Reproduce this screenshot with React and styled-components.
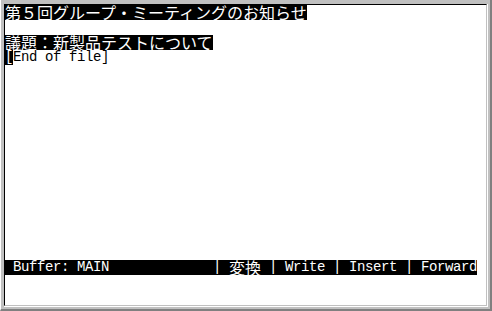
import React from 'react';
import styled, { createGlobalStyle } from 'styled-components';

const GlobalStyle = createGlobalStyle`
  html, body {
    margin: 0;
    padding: 0;
    background: #c0c0c0;
  }
`;

const Frame = styled.div`
  width: 492px;
  height: 311px;
  box-sizing: border-box;
  background: #c0c0c0;
  border-left: 1px solid #ffffff;
  border-right: 2px solid #808080;
  border-bottom: 2px solid #808080;
  padding: 4px 2px 2px 3px;
`;

const Bevel = styled.div`
  height: 100%;
  box-sizing: border-box;
  border-right: 1px solid #ffffff;
  border-bottom: 1px solid #ffffff;
`;

// terminal area: 8px half-width cells, 16px full-width cells, 15px rows
const Screen = styled.div`
  height: 100%;
  box-sizing: border-box;
  display: flex;
  flex-direction: column;
  background: #ffffff;
  border-top: 1px solid #000000;
  border-left: 1px solid #000000;
  border-right: 1px solid #c0c0c0;
  border-bottom: 1px solid #c0c0c0;
  color: #000000;
  font-family: "Liberation Mono", "DejaVu Sans Mono", monospace;
  font-size: 14px;
  letter-spacing: -0.4px;
  line-height: 15px;
`;

const Body = styled.div`
  flex: 1;
`;

const Line = styled.div`
  height: 15px;
  line-height: 15px;
  white-space: pre;
`;

const Highlight = styled.span`
  display: inline-block;
  height: 15px;
  line-height: 15px;
  vertical-align: top;
  background: #000000;
  color: #ffffff;
`;

const Wide = styled.span`
  font-family: "Noto Sans CJK JP", sans-serif;
  font-size: 16px;
  letter-spacing: 0;
  line-height: 15px;
`;

const Cursor = styled.span`
  display: inline-block;
  width: 8px;
  height: 15px;
  vertical-align: top;
  background: #000000;
  color: #ffffff;
`;

const StatusBar = styled.div`
  display: flex;
  width: 472px;
  height: 15px;
  line-height: 15px;
  background: #000000;
  color: #ffffff;
  white-space: pre;
`;

const BufferName = styled.span`
  flex: 1;
  padding-left: 8px;
`;

const Separator = styled.span`
  width: 8px;
`;

const Command = styled.span`
  padding-left: 8px;
  padding-right: ${p => (p.$last ? '0' : '8px')};
`;

const Footer = styled.div`
  height: 30px;
`;

const commands = [
  { label: '変換', wide: true },
  { label: 'Write' },
  { label: 'Insert' },
  { label: 'Forward' },
];

export default function App() {
  return (
    <>
      <GlobalStyle />
      <Frame>
        <Bevel>
          <Screen>
            <Body>
              <Line>
                <Highlight>
                  <Wide>第５回グループ・ミーティングのお知らせ</Wide>
                </Highlight>
              </Line>
              <Line />
              <Line>
                <Highlight>
                  <Wide>議題：新製品テストについて</Wide>
                </Highlight>
              </Line>
              <Line>
                <Cursor>[</Cursor>End of file]
              </Line>
            </Body>
            <StatusBar>
              <BufferName>Buffer: MAIN</BufferName>
              {commands.map((c, i) => (
                <React.Fragment key={c.label}>
                  <Separator>|</Separator>
                  <Command $last={i === commands.length - 1}>
                    {c.wide ? <Wide>{c.label}</Wide> : c.label}
                  </Command>
                </React.Fragment>
              ))}
            </StatusBar>
            <Footer />
          </Screen>
        </Bevel>
      </Frame>
    </>
  );
}
